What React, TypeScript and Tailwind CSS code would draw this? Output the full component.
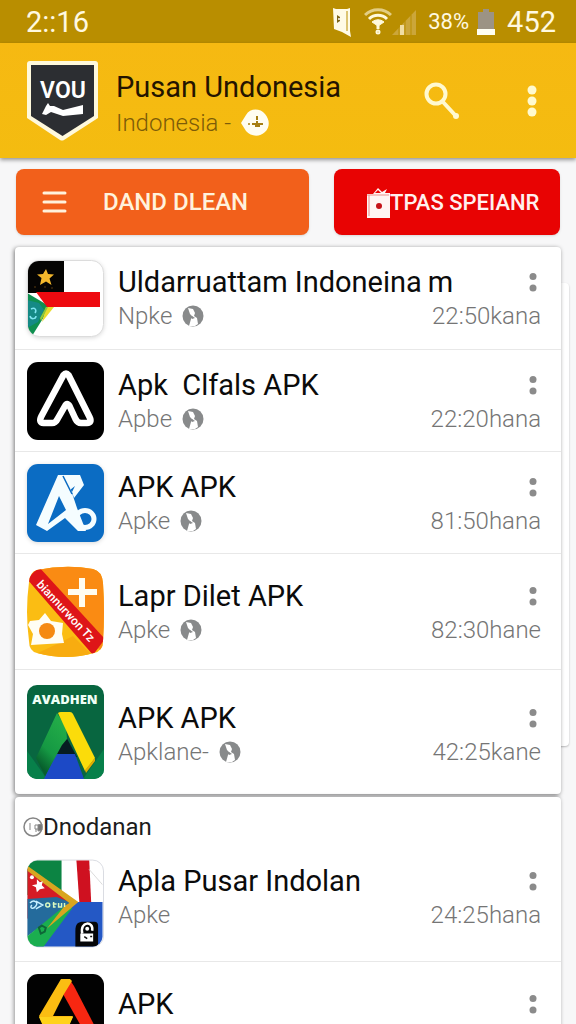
import type { ReactNode } from "react"

type AppItem = {
    name: string
    publisher?: string
    badge?: boolean
    time?: string
    icon: ReactNode
    row: string
    body?: string
}

function FlagIcon() {
    return (
        <svg viewBox="0 0 77 77" className="h-[77px] w-[77px] drop-shadow-sm">
            <defs>
                <clipPath id="flag-clip"><rect x="1" y="1" width="75" height="75" rx="11" /></clipPath>
            </defs>
            <rect x="0.5" y="0.5" width="76" height="76" rx="12" fill="#fff" stroke="#dcdcdc" />
            <g clipPath="url(#flag-clip)">
                <path d="M0 0h37v33H0z" fill="#050403" />
                <path d="M19 9l2 5 6 .5-4.500 4 2 6.500-5.500-3.500-6 3.500 1.500-7-4.500-3.500 6-.5z" fill="#f3b72c" />
                <path d="M7 27h2M17 27h2M24 28h2" stroke="#5b3b10" />
                <path d="M0 33l22 13-2 6L5 76l-5-4z" fill="#0f8f50" />
                <path d="M0 40l12 3 5 7-6 12-11 6z" fill="#158a86" />
                <path d="M19 47h8L15 62z" fill="#e9dc2e" />
                <path d="M19 47l2 0-7 14-1-3z" fill="#8fc63c" />
                <path d="M9 32h64v15H20z" fill="#ee0a10" />
                <path d="M4 49c4-2 6 1 4 4m-5 3c1 4 6 3 6 0" fill="none" stroke="#7ee5f0" strokeWidth="1.500" />
            </g>
        </svg>
    )
}

function BlackTriangleIcon() {
    return (
        <svg viewBox="0 0 77 78" className="h-[78px] w-[77px]">
            <rect width="77" height="78" rx="11" fill="#000" />
            <path
                d="M36.500 13L14.500 54c-2.500 5-1 7 2 7h8.500c3 0 4-1 5.500-4L38 44q2-4 4.500 0l6 13c1.500 3 3 4 5.500 4h6c3.500 0 4.500-2 2.500-6L41.500 13q-2.500-3-5 0z"
                fill="none"
                stroke="#fff"
                strokeWidth="6.500"
                strokeLinejoin="round"
            />
        </svg>
    )
}

function BlueIcon() {
    return (
        <svg viewBox="0 0 77 78" className="h-[78px] w-[77px] drop-shadow-sm">
            <rect width="77" height="78" rx="11" fill="#0b6cc3" />
            <path
                d="M31 11h8l11 33 9 23h-8L38 54 20 67 9 61zM32 32L21 60l18-14z"
                fill="#f5fdff"
                fillRule="evenodd"
            />
            <path d="M36 11h17l4 10-10 13-2-6 3-6-5 4z" fill="#f5fdff" />
            <path d="M36 12l9 18" stroke="#0b6cc3" strokeWidth="1.500" />
            <ellipse cx="58" cy="55" rx="9" ry="8.500" fill="none" stroke="#f5fdff" strokeWidth="5" />
            <path d="M38 48l11 6-2 5z" fill="#f5fdff" />
        </svg>
    )
}

function OrangeIcon() {
    return (
        <svg viewBox="0 0 77 92" className="h-[92px] w-[77px]">
            <defs>
                <clipPath id="orange-clip">
                    <path d="M10 4Q39-2 66 3q9 2 10 14 2 29 0 58 0 10-9 12-28 8-57 0-8-2-8-12-4-29 0-59 1-10 8-12z" />
                </clipPath>
            </defs>
            <g clipPath="url(#orange-clip)">
                <path d="M0 0h77v92H0z" fill="#fbbd13" />
                <path d="M0 0h80v92L5 8z" fill="#fa8b13" />
                <path d="M30 78l16-8 22 22H0z" fill="#f8ac10" />
                <path d="M0 13L12 1l66 72-12 16z" fill="#de1518" />
            </g>
            <path d="M52 12h6v11h12v6H58v12h-6V29H41v-6h11z" fill="#fffdf0" />
            <path d="M18 47l6 8 12 2-1 11 2 9-17 1-16 1 2-11-5-9 2-4 9-1z" fill="#fffef4" />
            <circle cx="20" cy="65" r="8" fill="#f58a12" />
            <text
                x="9"
                y="19"
                transform="rotate(47 9 19)"
                fill="#fff"
                fontFamily="Roboto, sans-serif"
                fontSize="12"
                fontWeight="500"
            >
                biannurwon Tz
            </text>
        </svg>
    )
}

function DriveIcon() {
    return (
        <svg viewBox="0 0 77 94" className="h-[94px] w-[77px]">
            <defs>
                <clipPath id="drive-clip"><rect width="77" height="94" rx="10" /></clipPath>
                <linearGradient id="drive-leg" x1="0.7" y1="0" x2="0.2" y2="1">
                    <stop offset="0.1" stopColor="#22ab48" />
                    <stop offset="0.6" stopColor="#159843" />
                    <stop offset="0.9" stopColor="#075e2c" />
                </linearGradient>
            </defs>
            <g clipPath="url(#drive-clip)">
                <path d="M0 0h77v94H0z" fill="#086640" />
                <path d="M0 66l20 28H0zM56 94l21-30v30z" fill="#07804a" />
                <path d="M38 50l12 22H28z" fill="#061c22" />
                <path d="M29 69h19l9 25H17z" fill="#1c49c6" />
                <path d="M30 28l9 14 1 12-5 6-17 31-9-18z" fill="url(#drive-leg)" />
                <path d="M31 28q1-1 3-1h9q2 0 3 2l22 44-10 13z" fill="#fbdc0a" />
                <path d="M68 73v3L59 88l-1-3z" fill="#e0ad00" />
            </g>
            <text x="38" y="19" textAnchor="middle" fill="#effff6" fontFamily="Open Sans, sans-serif" fontSize="13" fontWeight="800">
                AVADHEN
            </text>
        </svg>
    )
}

function CollageIcon() {
    return (
        <svg viewBox="0 0 78 90" className="h-[90px] w-[77px]">
            <defs>
                <clipPath id="collage-clip"><rect x="0.5" y="1" width="76" height="87" rx="10" /></clipPath>
            </defs>
            <rect x="0.5" y="0.5" width="77" height="88" rx="11" fill="#fff" stroke="#d9dbe2" />
            <g clipPath="url(#collage-clip)">
                <path d="M0 0h35v36H0z" fill="#0c8443" />
                <path d="M50 0h13l2 43H53z" fill="#cf1120" />
                <path d="M63 10l14 16" stroke="#dadada" />
                <path d="M44 43h33v46H8z" fill="#2458c5" />
                <path d="M0 9l43 34L0 60z" fill="#d51b25" />
                <path d="M0 40l30-2 16 6L0 78z" fill="#246b9c" />
                <path d="M0 78l38-31 8 2-32 43H0z" fill="#1aae4f" />
                <path d="M0 6l52 37-32 27 18-23 5-3L0 11z" fill="#d9a51f" />
                <path d="M10 20l3 3 3-1-1 4 3 3-5 1-3 3-1-5-4-2 5-1z" fill="#fff" />
                <circle cx="5" cy="18" r="2" fill="#fff" />
                <path d="M3 44c4-4 9-1 6 3s-7 2-4-1M9 42l7 4-7 4" fill="none" stroke="#c6efff" strokeWidth="1.500" />
                <path d="M19 46a2 2 0 1 0 4 0 2 2 0 1 0-4 0M27 43v5h2m-3-3h4M32 44v4h3v-4M38 44v4" fill="none" stroke="#d8f8c0" strokeWidth="1.500" />
                <path d="M12 69l3-2 4 2-1 4-4 2z" fill="none" stroke="#0e6637" strokeWidth="2" />
                <path d="M49 90V72c0-7 3-9 8-9h10c5 0 5 2 5 6v21z" fill="#050608" />
                <path d="M54 75h13v8H54z" fill="#fff" />
                <path d="M56 75c-3-13 12-13 10-3" fill="none" stroke="#fff" strokeWidth="2.500" />
                <path d="M58 78l3 2m3-2h2" stroke="#111" strokeWidth="1.500" />
                <circle cx="61" cy="70" r="2" fill="#fff" />
            </g>
        </svg>
    )
}

function RedYellowIcon() {
    return (
        <svg viewBox="0 0 77 90" className="h-[90px] w-[77px]">
            <rect width="77" height="90" rx="11" fill="#020202" />
            <path d="M43 6l4 6 30 58H64L36 20z" fill="#f72711" />
            <path d="M34 5h9l2 2-8 13-11 22h20l-4 9H16l-4-9z" fill="#fbbd12" />
            <path d="M12 43h34l-4 9H16z" fill="#ffd21b" />
        </svg>
    )
}

function GlobeBadge() {
    return (
        <svg viewBox="0 0 22 22" className="h-[22px] w-[22px] shrink-0">
            <circle cx="11" cy="11" r="10.500" fill="#888a8b" />
            <path d="M6 3l5 1 2 4-1 3 3 2 1 6-3 2H7l2-7 2-2-3-3z" fill="#fff" />
            <path d="M10 11l3 2-3 1z" fill="#888a8b" />
        </svg>
    )
}

const topApps: AppItem[] = [
    { name: "Uldarruattam Indoneina\u2009m", publisher: "Npke", badge: true, time: "22:50kana", icon: <FlagIcon />, row: "h-[103px]" },
    { name: "Apk  Clfals APK", publisher: "Apbe", badge: true, time: "22:20hana", icon: <BlackTriangleIcon />, row: "h-[102px]" },
    { name: "APK APK", publisher: "Apke", badge: true, time: "81:50hana", icon: <BlueIcon />, row: "h-[102px]" },
    { name: "Lapr Dilet APK", publisher: "Apke", badge: true, time: "82:30hane", icon: <OrangeIcon />, row: "h-[116px]" },
    { name: "APK APK", publisher: "Apklane-", badge: true, time: "42:25kane", icon: <DriveIcon />, row: "h-[124px]", body: "pt-1" },
]

const moreApps: AppItem[] = [
    { name: "Apla Pusar Indolan", publisher: "Apke", time: "24:25hana", icon: <CollageIcon />, row: "items-start pb-3", body: "pt-1" },
    { name: "APK", icon: <RedYellowIcon />, row: "items-start py-3", body: "pt-3" },
]

function AppRow({ app }: { app: AppItem }) {
    return (
        <li className={`flex gap-3.5 border-b border-[#e8e8e8] pr-5 pl-3 last:border-b-0 ${app.row} ${app.row.includes("items-start") ? "" : "items-center"}`}>
            <div className="shrink-0">{app.icon}</div>
            <div className={`min-w-0 flex-1 ${app.body ?? ""}`}>
                <div className="flex items-center justify-between">
                    <h2 className="text-[29px] leading-9 whitespace-pre text-[#0b0b0b]">{app.name}</h2>
                    <button aria-label="App options" className="shrink-0">
                        <svg viewBox="0 0 16 24" className="h-6 w-4" fill="#8b8b8b">
                            <circle cx="8" cy="6.500" r="3.500" />
                            <circle cx="8" cy="18" r="3.500" />
                        </svg>
                    </button>
                </div>
                {app.publisher && (
                    <div className="flex items-center justify-between text-[24px] leading-8 font-light text-[#757575]">
                        <span className="flex items-center gap-2.5">
                            {app.publisher}
                            {app.badge && <GlobeBadge />}
                        </span>
                        <span>{app.time}</span>
                    </div>
                )}
            </div>
        </li>
    )
}

function StatusBar() {
    return (
        <div className="flex h-[43px] items-center justify-between bg-[#b98e00] pr-5 pl-[26px] text-[29px] leading-[42px] text-[#fff9e0]">
            <span>2::16</span>
            <div className="flex items-center">
                <svg viewBox="0 0 20 32" className="mr-3 h-8 w-5">
                    <path d="M1 2l3 1h11l3-1v23l1 6-9-5-8-3z" fill="#fffbe6" />
                    <path d="M15 5v20" stroke="#b98e00" />
                    <path d="M5 9l3 2v4l-3 2z" fill="#7b6419" />
                    <circle cx="7" cy="13" r="1" fill="#fff" />
                </svg>
                <svg viewBox="0 0 28 28" className="h-7 w-7" fill="none" stroke="#fff9dc" strokeWidth="3">
                    <path d="M1 7c7-7 19-7 26 0" opacity=".6" />
                    <path d="M5 11c5-5 13-5 18 0" />
                    <path d="M8 14c4-3 8-3 12 0l-6 4z" fill="#fff9dc" strokeWidth="1" />
                    <path d="M14 17v4" strokeWidth="3" />
                    <circle cx="14" cy="24" r="1.500" strokeWidth="2" />
                </svg>
                <svg viewBox="0 0 24 26" className="mr-3 h-[26px] w-6">
                    <path d="M0 26L24 1v25z" fill="#cba63a" />
                    <path d="M7 26v-8M13 26V12M19 26V6" stroke="#b98e00" />
                    <path d="M10 26V16" stroke="#f0dda2" strokeWidth="4" />
                </svg>
                <span className="mr-2 text-[22px]">38%</span>
                <svg viewBox="0 0 18 28" className="mr-3 h-7 w-[18px]">
                    <path d="M1 4h5V1h6v3h5v18H1z" fill="#9c9384" />
                    <path d="M0 21h18v6H0z" fill="#fffef2" />
                </svg>
                <span>452</span>
            </div>
        </div>
    )
}

function Header() {
    return (
        <header className="relative flex h-[115px] items-center bg-gradient-to-b from-[#f6b912] to-[#f4bc10] pr-8 pl-[27px] shadow-[0_2px_4px_rgba(0,0,0,0.4)]">
            <svg viewBox="0 0 71 81" className="mr-[18px] h-[81px] w-[71px] shrink-0">
                <path d="M3 1h65q3 0 3 3v54L37 80q-2 1-4 0L0 58V4q0-3 3-3z" fill="#fff9dc" />
                <path d="M4 5h63v51L35.500 76 4 56z" fill="#2c2e32" />
                <text x="36" y="38" textAnchor="middle" fill="#fff" fontFamily="Roboto, sans-serif" fontSize="23" fontWeight="600">
                    VOU
                </text>
                <path d="M21 43l2 3h4l9 4 20-5v9l-20 2-12-4-5 3-4-1 4-8z" fill="#fff" />
            </svg>
            <div className="min-w-0 flex-1 pt-2">
                <h1 className="text-[29px] leading-9 text-[#241400]">Pusan Undonesia</h1>
                <p className="flex items-center gap-2.5 text-[24px] leading-9 font-light text-[#7d5c08]">
                    Indonesia -
                    <svg viewBox="0 0 28 28" className="h-7 w-7">
                        <path d="M0 14L5 6C9-1 19-1 24 5s5 13 0 18-14 5-19-1z" fill="#fffdf0" />
                        <path d="M16 7v4M11 15h11M16 12v5M14 17h5" stroke="#a67e11" strokeWidth="2" fill="none" />
                        <circle cx="8" cy="15" r="1" fill="#a67e11" />
                    </svg>
                </p>
            </div>
            <button aria-label="Search" className="mr-[60px]">
                <svg viewBox="0 0 36 38" className="h-[38px] w-9" fill="none" stroke="#fff9d0">
                    <circle cx="12" cy="12" r="9.500" strokeWidth="4" />
                    <path d="M19 20l12 13" strokeWidth="4" strokeLinecap="round" />
                    <circle cx="32" cy="34" r="2" fill="#fff9d0" strokeWidth="2" />
                </svg>
            </button>
            <button aria-label="More options">
                <svg viewBox="0 0 24 32" className="h-8 w-6" fill="#fffacf">
                    <circle cx="12" cy="5" r="4.500" />
                    <circle cx="12" cy="16" r="4.500" />
                    <circle cx="12" cy="27" r="4.500" />
                </svg>
            </button>
        </header>
    )
}

export default function App() {
    return (
        <div className="h-screen overflow-hidden bg-[#f7f7f8] font-['Roboto',sans-serif]">
            <StatusBar />
            <Header />

            <main className="px-[15px]">
                <div className="grid grid-cols-[293fr_226fr] gap-[25px] px-px pt-[11px] pb-3">
                    <button className="flex h-[66px] items-center gap-9 rounded-lg bg-[#f2601b] pl-[26px] text-[24px] font-medium whitespace-nowrap text-[#fff2dc] shadow-sm">
                        <svg viewBox="0 0 25 24" className="h-6 w-[25px]" stroke="currentColor" strokeWidth="3" strokeLinecap="round">
                            <path d="M2 3h21M2 12h21M2 21h21" />
                        </svg>
                        DAND DLEAN
                    </button>
                    <button className="flex h-[66px] items-center rounded-lg bg-[#e80303] pl-8 text-[22px] font-medium whitespace-nowrap text-[#fff0ee] shadow-sm">
                        <svg viewBox="0 0 24 32" className="h-8 w-6 shrink-0">
                            <path d="M3 8h4l5-6 4 4 5-3-2 4h5v25H1V8z" fill="#fff5f3" />
                            <path d="M9 7l3-3 3 3z" fill="#e80303" />
                            <path d="M3 9v21M1 9h22" stroke="#eb8f8b" />
                            <circle cx="13" cy="20" r="3" fill="#c51218" />
                        </svg>
                        TPAS SPEIANR
                    </button>
                </div>

                <section className="relative">
                    <div className="absolute top-9 -right-2 bottom-12 w-10 rounded-sm bg-white shadow-[0_1px_2px_rgba(0,0,0,0.25)]" />
                    <ul className="relative rounded-sm bg-white shadow-[-1px_1px_4px_rgba(0,0,0,0.5)]">
                        {topApps.map((app, i) => (
                            <AppRow key={i} app={app} />
                        ))}
                    </ul>
                </section>

                <section className="relative mt-[3px] rounded-sm bg-white shadow-[-1px_0_4px_rgba(0,0,0,0.4)]">
                    <h3 className="flex items-center pt-3.5 pb-4 pl-2 text-[24px] leading-8 text-[#1b1b1b]">
                        <svg viewBox="0 0 20 20" className="h-5 w-5" fill="none" stroke="#858585">
                            <circle cx="10" cy="10" r="9" strokeWidth="1.500" />
                            <path d="M7 6v7M12 8h5v4h-5zM13 12v3" />
                            <path d="M15 8l4-1v6l-4 1z" fill="#777" />
                        </svg>
                        Dnodanan
                    </h3>
                    <ul>
                        {moreApps.map((app, i) => (
                            <AppRow key={i} app={app} />
                        ))}
                    </ul>
                </section>
            </main>
        </div>
    )
}
